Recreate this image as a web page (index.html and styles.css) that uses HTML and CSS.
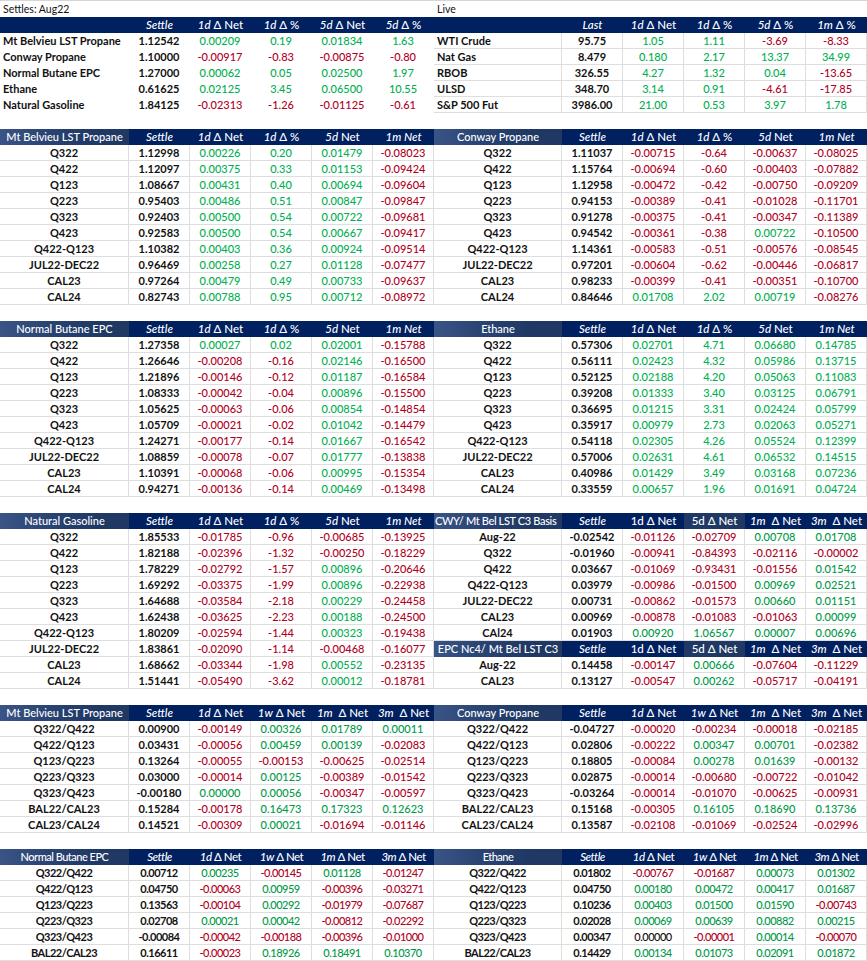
FILE: index.html
```html
<!DOCTYPE html>
<html>
<head>
<meta charset="utf-8">
<link rel="stylesheet" href="styles.css">
</head>
<body>
<div class="page">
  <div class="band title">
    <div class="L"><span>Settles: Aug22</span></div>
    <div class="R"><span>Live</span></div>
  </div>

  <div class="band">
    <div class="t L top nogrid">
      <div class="r h"><span></span><span><em>Settle</em></span><span><em>1d</em> Δ Net</span><span><em>1d</em> Δ %</span><span><em>5d</em> Δ Net</span><span><em>5d</em> Δ %</span></div>
      <div class="r"><span>Mt Belvieu LST Propane</span><span>1.12542</span><span class="g">0.00209</span><span class="g">0.19</span><span class="g">0.01834</span><span class="g">1.63</span></div>
      <div class="r"><span>Conway Propane</span><span>1.10000</span><span class="d">-0.00917</span><span class="d">-0.83</span><span class="d">-0.00875</span><span class="d">-0.80</span></div>
      <div class="r"><span>Normal Butane EPC</span><span>1.27000</span><span class="g">0.00062</span><span class="g">0.05</span><span class="g">0.02500</span><span class="g">1.97</span></div>
      <div class="r"><span>Ethane</span><span>0.61625</span><span class="g">0.02125</span><span class="g">3.45</span><span class="g">0.06500</span><span class="g">10.55</span></div>
      <div class="r"><span>Natural Gasoline</span><span>1.84125</span><span class="d">-0.02313</span><span class="d">-1.26</span><span class="d">-0.01125</span><span class="d">-0.61</span></div>
    </div>
    <div class="t R top">
      <div class="r h"><span></span><span><em>Last</em></span><span><em>1d</em> Δ Net</span><span><em>1d</em> Δ %</span><span><em>5d</em> Δ %</span><span><em>1m</em> Δ %</span></div>
      <div class="r"><span>WTI Crude</span><span>95.75</span><span class="g">1.05</span><span class="g">1.11</span><span class="d">-3.69</span><span class="d">-8.33</span></div>
      <div class="r"><span>Nat Gas</span><span>8.479</span><span class="g">0.180</span><span class="g">2.17</span><span class="g">13.37</span><span class="g">34.99</span></div>
      <div class="r"><span>RBOB</span><span>326.55</span><span class="g">4.27</span><span class="g">1.32</span><span class="g">0.04</span><span class="d">-13.65</span></div>
      <div class="r"><span>ULSD</span><span>348.70</span><span class="g">3.14</span><span class="g">0.91</span><span class="d">-4.61</span><span class="d">-17.85</span></div>
      <div class="r"><span>S&amp;P 500 Fut</span><span>3986.00</span><span class="g">21.00</span><span class="g">0.53</span><span class="g">3.97</span><span class="g">1.78</span></div>
    </div>
  </div>

  <div class="band">
    <div class="t L">
      <div class="r h"><span class="lh">Mt Belvieu LST Propane</span><span><em>Settle</em></span><span><em>1d</em> Δ Net</span><span><em>1d</em> Δ %</span><span><em>5d</em> Net</span><span><em>1m Net</em></span></div>
      <div class="r"><span>Q322</span><span>1.12998</span><span class="g">0.00226</span><span class="g">0.20</span><span class="g">0.01479</span><span class="d">-0.08023</span></div>
      <div class="r"><span>Q422</span><span>1.12097</span><span class="g">0.00375</span><span class="g">0.33</span><span class="g">0.01153</span><span class="d">-0.09424</span></div>
      <div class="r"><span>Q123</span><span>1.08667</span><span class="g">0.00431</span><span class="g">0.40</span><span class="g">0.00694</span><span class="d">-0.09604</span></div>
      <div class="r"><span>Q223</span><span>0.95403</span><span class="g">0.00486</span><span class="g">0.51</span><span class="g">0.00847</span><span class="d">-0.09847</span></div>
      <div class="r"><span>Q323</span><span>0.92403</span><span class="g">0.00500</span><span class="g">0.54</span><span class="g">0.00722</span><span class="d">-0.09681</span></div>
      <div class="r"><span>Q423</span><span>0.92583</span><span class="g">0.00500</span><span class="g">0.54</span><span class="g">0.00667</span><span class="d">-0.09417</span></div>
      <div class="r"><span>Q422-Q123</span><span>1.10382</span><span class="g">0.00403</span><span class="g">0.36</span><span class="g">0.00924</span><span class="d">-0.09514</span></div>
      <div class="r"><span>JUL22-DEC22</span><span>0.96469</span><span class="g">0.00258</span><span class="g">0.27</span><span class="g">0.01128</span><span class="d">-0.07477</span></div>
      <div class="r"><span>CAL23</span><span>0.97264</span><span class="g">0.00479</span><span class="g">0.49</span><span class="g">0.00733</span><span class="d">-0.09637</span></div>
      <div class="r"><span>CAL24</span><span>0.82743</span><span class="g">0.00788</span><span class="g">0.95</span><span class="g">0.00712</span><span class="d">-0.08972</span></div>
    </div>
    <div class="t R">
      <div class="r h"><span class="lh">Conway Propane</span><span><em>Settle</em></span><span><em>1d</em> Δ Net</span><span><em>1d</em> Δ %</span><span><em>5d</em> Net</span><span><em>1m Net</em></span></div>
      <div class="r"><span>Q322</span><span>1.11037</span><span class="d">-0.00715</span><span class="d">-0.64</span><span class="d">-0.00637</span><span class="d">-0.08025</span></div>
      <div class="r"><span>Q422</span><span>1.15764</span><span class="d">-0.00694</span><span class="d">-0.60</span><span class="d">-0.00403</span><span class="d">-0.07882</span></div>
      <div class="r"><span>Q123</span><span>1.12958</span><span class="d">-0.00472</span><span class="d">-0.42</span><span class="d">-0.00750</span><span class="d">-0.09209</span></div>
      <div class="r"><span>Q223</span><span>0.94153</span><span class="d">-0.00389</span><span class="d">-0.41</span><span class="d">-0.01028</span><span class="d">-0.11701</span></div>
      <div class="r"><span>Q323</span><span>0.91278</span><span class="d">-0.00375</span><span class="d">-0.41</span><span class="d">-0.00347</span><span class="d">-0.11389</span></div>
      <div class="r"><span>Q423</span><span>0.94542</span><span class="d">-0.00361</span><span class="d">-0.38</span><span class="g">0.00722</span><span class="d">-0.10500</span></div>
      <div class="r"><span>Q422-Q123</span><span>1.14361</span><span class="d">-0.00583</span><span class="d">-0.51</span><span class="d">-0.00576</span><span class="d">-0.08545</span></div>
      <div class="r"><span>JUL22-DEC22</span><span>0.97201</span><span class="d">-0.00604</span><span class="d">-0.62</span><span class="d">-0.00446</span><span class="d">-0.06817</span></div>
      <div class="r"><span>CAL23</span><span>0.98233</span><span class="d">-0.00399</span><span class="d">-0.41</span><span class="d">-0.00351</span><span class="d">-0.10700</span></div>
      <div class="r"><span>CAL24</span><span>0.84646</span><span class="g">0.01708</span><span class="g">2.02</span><span class="g">0.00719</span><span class="d">-0.08276</span></div>
    </div>
  </div>

  <div class="band">
    <div class="t L">
      <div class="r h"><span class="lh">Normal Butane EPC</span><span><em>Settle</em></span><span><em>1d</em> Δ Net</span><span><em>1d</em> Δ %</span><span><em>5d</em> Net</span><span><em>1m Net</em></span></div>
      <div class="r"><span>Q322</span><span>1.27358</span><span class="g">0.00027</span><span class="g">0.02</span><span class="g">0.02001</span><span class="d">-0.15788</span></div>
      <div class="r"><span>Q422</span><span>1.26646</span><span class="d">-0.00208</span><span class="d">-0.16</span><span class="g">0.02146</span><span class="d">-0.16500</span></div>
      <div class="r"><span>Q123</span><span>1.21896</span><span class="d">-0.00146</span><span class="d">-0.12</span><span class="g">0.01187</span><span class="d">-0.16584</span></div>
      <div class="r"><span>Q223</span><span>1.08333</span><span class="d">-0.00042</span><span class="d">-0.04</span><span class="g">0.00896</span><span class="d">-0.15500</span></div>
      <div class="r"><span>Q323</span><span>1.05625</span><span class="d">-0.00063</span><span class="d">-0.06</span><span class="g">0.00854</span><span class="d">-0.14854</span></div>
      <div class="r"><span>Q423</span><span>1.05709</span><span class="d">-0.00021</span><span class="d">-0.02</span><span class="g">0.01042</span><span class="d">-0.14479</span></div>
      <div class="r"><span>Q422-Q123</span><span>1.24271</span><span class="d">-0.00177</span><span class="d">-0.14</span><span class="g">0.01667</span><span class="d">-0.16542</span></div>
      <div class="r"><span>JUL22-DEC22</span><span>1.08859</span><span class="d">-0.00078</span><span class="d">-0.07</span><span class="g">0.01777</span><span class="d">-0.13838</span></div>
      <div class="r"><span>CAL23</span><span>1.10391</span><span class="d">-0.00068</span><span class="d">-0.06</span><span class="g">0.00995</span><span class="d">-0.15354</span></div>
      <div class="r"><span>CAL24</span><span>0.94271</span><span class="d">-0.00136</span><span class="d">-0.14</span><span class="g">0.00469</span><span class="d">-0.13498</span></div>
    </div>
    <div class="t R">
      <div class="r h"><span class="lh">Ethane</span><span><em>Settle</em></span><span><em>1d</em> Δ Net</span><span><em>1d</em> Δ %</span><span><em>5d</em> Net</span><span><em>1m Net</em></span></div>
      <div class="r"><span>Q322</span><span>0.57306</span><span class="g">0.02701</span><span class="g">4.71</span><span class="g">0.06680</span><span class="g">0.14785</span></div>
      <div class="r"><span>Q422</span><span>0.56111</span><span class="g">0.02423</span><span class="g">4.32</span><span class="g">0.05986</span><span class="g">0.13715</span></div>
      <div class="r"><span>Q123</span><span>0.52125</span><span class="g">0.02188</span><span class="g">4.20</span><span class="g">0.05063</span><span class="g">0.11083</span></div>
      <div class="r"><span>Q223</span><span>0.39208</span><span class="g">0.01333</span><span class="g">3.40</span><span class="g">0.03125</span><span class="g">0.06791</span></div>
      <div class="r"><span>Q323</span><span>0.36695</span><span class="g">0.01215</span><span class="g">3.31</span><span class="g">0.02424</span><span class="g">0.05799</span></div>
      <div class="r"><span>Q423</span><span>0.35917</span><span class="g">0.00979</span><span class="g">2.73</span><span class="g">0.02063</span><span class="g">0.05271</span></div>
      <div class="r"><span>Q422-Q123</span><span>0.54118</span><span class="g">0.02305</span><span class="g">4.26</span><span class="g">0.05524</span><span class="g">0.12399</span></div>
      <div class="r"><span>JUL22-DEC22</span><span>0.57006</span><span class="g">0.02631</span><span class="g">4.61</span><span class="g">0.06532</span><span class="g">0.14515</span></div>
      <div class="r"><span>CAL23</span><span>0.40986</span><span class="g">0.01429</span><span class="g">3.49</span><span class="g">0.03168</span><span class="g">0.07236</span></div>
      <div class="r"><span>CAL24</span><span>0.33559</span><span class="g">0.00657</span><span class="g">1.96</span><span class="g">0.01691</span><span class="g">0.04724</span></div>
    </div>
  </div>

  <div class="band">
    <div class="t L">
      <div class="r h"><span class="lh">Natural Gasoline</span><span><em>Settle</em></span><span><em>1d</em> Δ Net</span><span><em>1d</em> Δ %</span><span><em>5d</em> Net</span><span><em>1m Net</em></span></div>
      <div class="r"><span>Q322</span><span>1.85533</span><span class="d">-0.01785</span><span class="d">-0.96</span><span class="d">-0.00685</span><span class="d">-0.13925</span></div>
      <div class="r"><span>Q422</span><span>1.82188</span><span class="d">-0.02396</span><span class="d">-1.32</span><span class="d">-0.00250</span><span class="d">-0.18229</span></div>
      <div class="r"><span>Q123</span><span>1.78229</span><span class="d">-0.02792</span><span class="d">-1.57</span><span class="g">0.00896</span><span class="d">-0.20646</span></div>
      <div class="r"><span>Q223</span><span>1.69292</span><span class="d">-0.03375</span><span class="d">-1.99</span><span class="g">0.00896</span><span class="d">-0.22938</span></div>
      <div class="r"><span>Q323</span><span>1.64688</span><span class="d">-0.03584</span><span class="d">-2.18</span><span class="g">0.00229</span><span class="d">-0.24458</span></div>
      <div class="r"><span>Q423</span><span>1.62438</span><span class="d">-0.03625</span><span class="d">-2.23</span><span class="g">0.00188</span><span class="d">-0.24500</span></div>
      <div class="r"><span>Q422-Q123</span><span>1.80209</span><span class="d">-0.02594</span><span class="d">-1.44</span><span class="g">0.00323</span><span class="d">-0.19438</span></div>
      <div class="r"><span>JUL22-DEC22</span><span>1.83861</span><span class="d">-0.02090</span><span class="d">-1.14</span><span class="d">-0.00468</span><span class="d">-0.16077</span></div>
      <div class="r"><span>CAL23</span><span>1.68662</span><span class="d">-0.03344</span><span class="d">-1.98</span><span class="g">0.00552</span><span class="d">-0.23135</span></div>
      <div class="r"><span>CAL24</span><span>1.51441</span><span class="d">-0.05490</span><span class="d">-3.62</span><span class="g">0.00012</span><span class="d">-0.18781</span></div>
    </div>
    <div class="t R dk">
      <div class="r h"><span class="lh lft">CWY/ Mt Bel LST C3 Basis</span><span><em>Settle</em></span><span>1d Δ Net</span><span class="alt">5d Δ Net</span><span><em>1m</em>&nbsp; Δ Net</span><span><em>3m</em>&nbsp; Δ Net</span></div>
      <div class="r"><span>Aug-22</span><span>-0.02542</span><span class="d">-0.01126</span><span class="d">-0.02709</span><span class="g">0.00708</span><span class="g">0.01708</span></div>
      <div class="r"><span>Q322</span><span>-0.01960</span><span class="d">-0.00941</span><span class="d">-0.84393</span><span class="d">-0.02116</span><span class="d">-0.00002</span></div>
      <div class="r"><span>Q422</span><span>0.03667</span><span class="d">-0.01069</span><span class="d">-0.93431</span><span class="d">-0.01556</span><span class="g">0.01542</span></div>
      <div class="r"><span>Q422-Q123</span><span>0.03979</span><span class="d">-0.00986</span><span class="d">-0.01500</span><span class="g">0.00969</span><span class="g">0.02521</span></div>
      <div class="r"><span>JUL22-DEC22</span><span>0.00731</span><span class="d">-0.00862</span><span class="d">-0.01573</span><span class="g">0.00660</span><span class="g">0.01151</span></div>
      <div class="r"><span>CAL23</span><span>0.00969</span><span class="d">-0.00878</span><span class="d">-0.01083</span><span class="d">-0.01063</span><span class="g">0.00099</span></div>
      <div class="r"><span>CAl24</span><span>0.01903</span><span class="g">0.00920</span><span class="g">1.06567</span><span class="g">0.00007</span><span class="g">0.00696</span></div>
      <div class="r h"><span class="lh">EPC Nc4/ Mt Bel LST C3</span><span><em>Settle</em></span><span>1d Δ Net</span><span class="alt">5d Δ Net</span><span><em>1m</em>&nbsp; Δ Net</span><span><em>3m</em>&nbsp; Δ Net</span></div>
      <div class="r"><span>Aug-22</span><span>0.14458</span><span class="d">-0.00147</span><span class="g">0.00666</span><span class="d">-0.07604</span><span class="d">-0.11229</span></div>
      <div class="r"><span>CAL23</span><span>0.13127</span><span class="d">-0.00547</span><span class="g">0.00262</span><span class="d">-0.05717</span><span class="d">-0.04191</span></div>
    </div>
  </div>

  <div class="band">
    <div class="t L dk">
      <div class="r h"><span class="lh">Mt Belvieu LST Propane</span><span><em>Settle</em></span><span><em>1d</em> Δ Net</span><span><em>1w</em> Δ Net</span><span><em>1m</em>&nbsp; Δ Net</span><span><em>3m</em>&nbsp; Δ Net</span></div>
      <div class="r"><span>Q322/Q422</span><span>0.00900</span><span class="d">-0.00149</span><span class="g">0.00326</span><span class="g">0.01789</span><span class="g">0.00011</span></div>
      <div class="r"><span>Q422/Q123</span><span>0.03431</span><span class="d">-0.00056</span><span class="g">0.00459</span><span class="g">0.00139</span><span class="d">-0.02083</span></div>
      <div class="r"><span>Q123/Q223</span><span>0.13264</span><span class="d">-0.00055</span><span class="d">-0.00153</span><span class="d">-0.00625</span><span class="d">-0.02514</span></div>
      <div class="r"><span>Q223/Q323</span><span>0.03000</span><span class="d">-0.00014</span><span class="g">0.00125</span><span class="d">-0.00389</span><span class="d">-0.01542</span></div>
      <div class="r"><span>Q323/Q423</span><span>-0.00180</span><span class="g">0.00000</span><span class="g">0.00056</span><span class="d">-0.00347</span><span class="d">-0.00597</span></div>
      <div class="r"><span>BAL22/CAL23</span><span>0.15284</span><span class="d">-0.00178</span><span class="g">0.16473</span><span class="g">0.17323</span><span class="g">0.12623</span></div>
      <div class="r"><span>CAL23/CAL24</span><span>0.14521</span><span class="d">-0.00309</span><span class="g">0.00021</span><span class="d">-0.01694</span><span class="d">-0.01146</span></div>
    </div>
    <div class="t R dk">
      <div class="r h"><span class="lh">Conway Propane</span><span><em>Settle</em></span><span><em>1d</em> Δ Net</span><span><em>1w</em> Δ Net</span><span><em>1m</em>&nbsp; Δ Net</span><span><em>3m</em>&nbsp; Δ Net</span></div>
      <div class="r"><span>Q322/Q422</span><span>-0.04727</span><span class="d">-0.00020</span><span class="d">-0.00234</span><span class="d">-0.00018</span><span class="d">-0.02185</span></div>
      <div class="r"><span>Q422/Q123</span><span>0.02806</span><span class="d">-0.00222</span><span class="g">0.00347</span><span class="g">0.00701</span><span class="d">-0.02382</span></div>
      <div class="r"><span>Q123/Q223</span><span>0.18805</span><span class="d">-0.00084</span><span class="g">0.00278</span><span class="g">0.01639</span><span class="d">-0.00132</span></div>
      <div class="r"><span>Q223/Q323</span><span>0.02875</span><span class="d">-0.00014</span><span class="d">-0.00680</span><span class="d">-0.00722</span><span class="d">-0.01042</span></div>
      <div class="r"><span>Q323/Q423</span><span>-0.03264</span><span class="d">-0.00014</span><span class="d">-0.01070</span><span class="d">-0.00625</span><span class="d">-0.00931</span></div>
      <div class="r"><span>BAL22/CAL23</span><span>0.15168</span><span class="d">-0.00305</span><span class="g">0.16105</span><span class="g">0.18690</span><span class="g">0.13736</span></div>
      <div class="r"><span>CAL23/CAL24</span><span>0.13587</span><span class="d">-0.02108</span><span class="d">-0.01069</span><span class="d">-0.02524</span><span class="d">-0.02996</span></div>
    </div>
  </div>

  <div class="band last">
    <div class="t L dk cond">
      <div class="r h"><span class="lh">Normal Butane EPC</span><span><em>Settle</em></span><span><em>1d</em> Δ Net</span><span><em>1w</em> Δ Net</span><span><em>1m</em> Δ Net</span><span><em>3m</em> Δ Net</span></div>
      <div class="r"><span>Q322/Q422</span><span>0.00712</span><span class="g">0.00235</span><span class="d">-0.00145</span><span class="g">0.01128</span><span class="d">-0.01247</span></div>
      <div class="r"><span>Q422/Q123</span><span>0.04750</span><span class="d">-0.00063</span><span class="g">0.00959</span><span class="d">-0.00396</span><span class="d">-0.03271</span></div>
      <div class="r"><span>Q123/Q223</span><span>0.13563</span><span class="d">-0.00104</span><span class="g">0.00292</span><span class="d">-0.01979</span><span class="d">-0.07687</span></div>
      <div class="r"><span>Q223/Q323</span><span>0.02708</span><span class="g">0.00021</span><span class="g">0.00042</span><span class="d">-0.00812</span><span class="d">-0.02292</span></div>
      <div class="r"><span>Q323/Q423</span><span>-0.00084</span><span class="d">-0.00042</span><span class="d">-0.00188</span><span class="d">-0.00396</span><span class="d">-0.01000</span></div>
      <div class="r"><span>BAL22/CAL23</span><span>0.16611</span><span class="d">-0.00023</span><span class="g">0.18926</span><span class="g">0.18491</span><span class="g">0.10370</span></div>
    </div>
    <div class="t R dk cond">
      <div class="r h"><span class="lh">Ethane</span><span><em>Settle</em></span><span><em>1d</em> Δ Net</span><span><em>1w</em> Δ Net</span><span><em>1m</em> Δ Net</span><span><em>3m</em> Δ Net</span></div>
      <div class="r"><span>Q322/Q422</span><span>0.01802</span><span class="d">-0.00767</span><span class="d">-0.01687</span><span class="g">0.00073</span><span class="g">0.01302</span></div>
      <div class="r"><span>Q422/Q123</span><span>0.04750</span><span class="g">0.00180</span><span class="g">0.00472</span><span class="g">0.00417</span><span class="g">0.01687</span></div>
      <div class="r"><span>Q123/Q223</span><span>0.10236</span><span class="g">0.00403</span><span class="g">0.01500</span><span class="g">0.01590</span><span class="d">-0.00743</span></div>
      <div class="r"><span>Q223/Q323</span><span>0.02028</span><span class="g">0.00069</span><span class="g">0.00639</span><span class="g">0.00882</span><span class="g">0.00215</span></div>
      <div class="r"><span>Q323/Q423</span><span>0.00347</span><span>0.00000</span><span class="d">-0.00001</span><span class="g">0.00014</span><span class="d">-0.00070</span></div>
      <div class="r"><span>BAL22/CAL23</span><span>0.14429</span><span class="g">0.00134</span><span class="g">0.01073</span><span class="g">0.02091</span><span class="g">0.01872</span></div>
    </div>
  </div>
</div>
</body>
</html>
```
FILE: styles.css
```css
* { box-sizing: border-box; }
html, body { margin: 0; padding: 0; background: #fff; }
body {
  font-family: Lato, "Liberation Sans", sans-serif;
  font-size: 11px;
  font-weight: 500;
  color: #111;
}
.page {
  width: 867px;
  border-top: 1px solid #d6d6d6;
}
.band {
  display: flex;
  margin-bottom: 16px;
}
.band.last { margin-bottom: 0; }
.band.title { margin-bottom: 0; height: 16px; }
.band.title .L, .band.title .R {
  line-height: 16px;
  padding-left: 3px;
  font-size: 10.5px;
  font-weight: 400;
  color: #111;
}
.L { width: 434px; }
.R { width: 433px; }

.r {
  display: grid;
  height: 16px;
  line-height: 15px;
}
.L .r { grid-template-columns: 129px repeat(5, 61px); }
.R .r { grid-template-columns: 128px repeat(5, 61px); }

.r > span {
  display: block;
  text-align: center;
  white-space: nowrap;
  overflow: hidden;
  border-right: 1px solid #dedede;
  border-bottom: 1px solid #dedede;
  font-variant-numeric: tabular-nums;
}
.r > span:nth-child(-n+2) { font-weight: 700; color: #111; }

.top .r > span:first-child { text-align: left; padding-left: 3px; }
.nogrid .r > span { border-color: transparent; }

.r.h { line-height: 16px; }
.r.h > span {
  background: #002060;
  color: #fff;
  font-weight: 500;
  font-size: 11.5px;
  border: none;
}
.r.h > span.lh {
  font-size: 11px;
  background: linear-gradient(90deg, #3a5585 0%, #2a4474 35%, #1f3864 75%);
}
.r.h > span.alt { background: #1f3864; }
.r.h > span.lft { text-align: left; padding-left: 1px; letter-spacing: -0.35px; }
.r.h > span:nth-child(2), .r.h > span:nth-child(2) em { font-weight: 500; }

em { font-style: italic; }

.g { color: #00b050; }
.d { color: #b0001e; }
.dk .g { color: #009a48; }

.cond .r > span { letter-spacing: -0.5px; }
```
